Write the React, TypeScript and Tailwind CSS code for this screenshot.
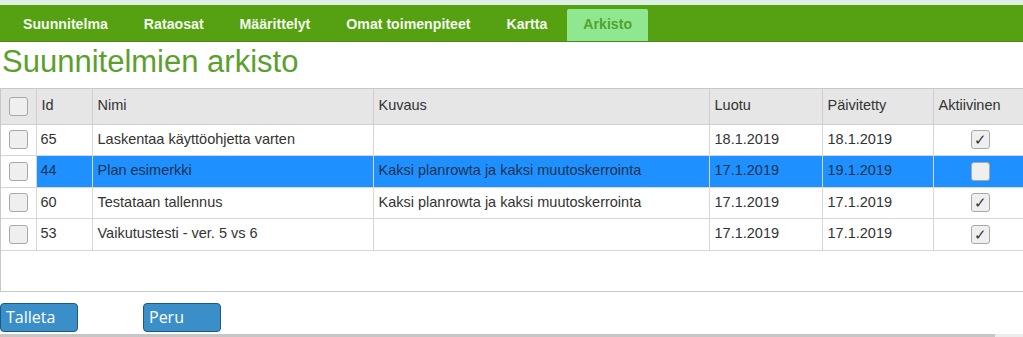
import React from "react";

const tabs = ["Suunnitelma", "Rataosat", "Määrittelyt", "Omat toimenpiteet", "Kartta", "Arkisto"];

const rows = [
  { id: "65", name: "Laskentaa käyttöohjetta varten", desc: "", luotu: "18.1.2019", paiv: "18.1.2019", active: true, sel: false },
  { id: "44", name: "Plan esimerkki", desc: "Kaksi planrowta ja kaksi muutoskerrointa", luotu: "17.1.2019", paiv: "19.1.2019", active: false, sel: true },
  { id: "60", name: "Testataan tallennus", desc: "Kaksi planrowta ja kaksi muutoskerrointa", luotu: "17.1.2019", paiv: "17.1.2019", active: true, sel: false },
  { id: "53", name: "Vaikutustesti - ver. 5 vs 6", desc: "", luotu: "17.1.2019", paiv: "17.1.2019", active: true, sel: false },
];

function Box({ checked }: { checked?: boolean }) {
  return (
    <div className="w-[19px] h-[19px] rounded-[3px] border border-[#a8a8a8] bg-[#efefef] flex items-center justify-center text-[#333] text-[15px] leading-none">
      {checked ? "✓" : ""}
    </div>
  );
}

export default function App() {
  return (
    <div className="w-[1023px] h-[337px] overflow-hidden bg-white font-['Liberation_Sans',Arial,sans-serif] text-[#333]">
      <div className="h-[5px] bg-[#dcefe3]" />
      <div className="h-[37px] bg-[#55a112] border-b border-[#4a8a14] flex items-end pl-[5px]">
        {tabs.map((t) =>
          t === "Arkisto" ? (
            <div key={t} className="h-[32px] px-[16px] bg-[#8fe88f] text-[#56a030] font-bold text-[14.15px] flex items-center rounded-t-[2px] ml-[2px]">
              {t}
            </div>
          ) : (
            <div key={t} className="h-[32px] px-[18px] text-[#f4faee] font-bold text-[14.15px] flex items-center">
              {t}
            </div>
          )
        )}
      </div>
      <div className="h-[46px] pl-[2px] text-[31px] leading-[40px] text-[#5ba02d]">Suunnitelmien arkisto</div>
      <div className="h-[204px] border border-[#c8c8c8] border-r-0 text-[14.5px]">
        <table className="border-collapse table-fixed w-[1023px]">
          <colgroup>
            <col className="w-[35px]" />
            <col className="w-[56px]" />
            <col className="w-[281px]" />
            <col className="w-[336px]" />
            <col className="w-[113px]" />
            <col className="w-[111px]" />
            <col className="w-[91px]" />
          </colgroup>
          <thead>
            <tr className="h-[35px] bg-[#e6e6e6]">
              <th className="border-r border-b border-[#cfcfcf] font-normal">
                <div className="flex justify-center"><Box /></div>
              </th>
              {["Id", "Nimi", "Kuvaus", "Luotu", "Päivitetty", "Aktiivinen"].map((h) => (
                <th key={h} className="border-r border-b border-[#cfcfcf] font-normal text-left px-[5px]">
                  {h}
                </th>
              ))}
            </tr>
          </thead>
          <tbody>
            {rows.map((r) => (
              <tr key={r.id} className={`h-[31.5px] ${r.sel ? "bg-[#1e90ff] text-[#1d3350]" : ""}`}>
                <td className="border-r border-b border-[#d6d6d6] bg-white">
                  <div className="flex justify-center"><Box /></div>
                </td>
                <td className="border-r border-b border-[#d6d6d6] px-[4px]">{r.id}</td>
                <td className="border-r border-b border-[#d6d6d6] px-[5px]">{r.name}</td>
                <td className="border-r border-b border-[#d6d6d6] px-[5px]">{r.desc}</td>
                <td className="border-r border-b border-[#d6d6d6] px-[5px]">{r.luotu}</td>
                <td className="border-r border-b border-[#d6d6d6] px-[5px]">{r.paiv}</td>
                <td className="border-r border-b border-[#d6d6d6]">
                  <div className="flex justify-center pl-[4px]"><Box checked={r.active} /></div>
                </td>
              </tr>
            ))}
          </tbody>
        </table>
      </div>
      <div className="flex mt-[11px] gap-[65px] font-['Open_Sans',sans-serif] text-[16px] text-white">
        <div className="w-[78px] h-[29px] bg-[#3b8fc9] border border-[#22577f] rounded-[4px] pl-[5px] leading-[27px]">Talleta</div>
        <div className="w-[78px] h-[29px] bg-[#3b8fc9] border border-[#22577f] rounded-[4px] pl-[5px] leading-[27px]">Peru</div>
      </div>
      <div className="flex mt-[2px] h-[4px]">
        <div className="w-[995px] bg-[#c6c6c6]" />
        <div className="flex-1 bg-[#ececec]" />
      </div>
    </div>
  );
}
